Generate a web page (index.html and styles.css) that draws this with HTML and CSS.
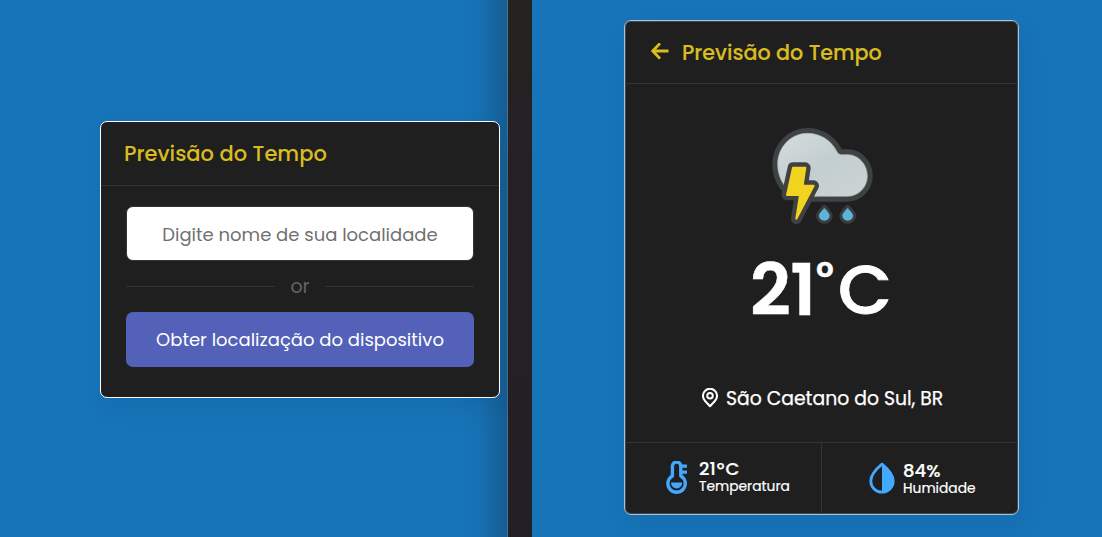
FILE: index.html
```html
<!DOCTYPE html>
<html lang="pt-BR">
<head>
<meta charset="utf-8">
<title>Previsão do Tempo</title>
<link rel="stylesheet" href="styles.css">
</head>
<body>
<main class="screens">
  <section class="pane pane-search">
    <div class="card search-card">
      <header class="card-header search-header"><span class="title">Previsão do Tempo</span></header>
      <div class="search-body">
        <input class="city" type="text" placeholder="Digite nome de sua localidade">
        <div class="separator"><span class="or">or</span></div>
        <button class="locate"><span>Obter localização do dispositivo</span></button>
      </div>
    </div>
  </section>
  <div class="gutter"></div>
  <section class="pane pane-result">
    <div class="card result-card">
      <header class="card-header result-header">
        <svg class="back" width="18" height="18" viewBox="0 0 18 18"><path d="M17.5 8H2.5M9 .4L1.8 8L9 15.6" fill="none" stroke="#d9bd20" stroke-width="2.8"/></svg>
        <span class="title title-result">Previsão do Tempo</span>
      </header>
      <div class="weather">
        <svg class="storm" width="125" height="120" viewBox="0 0 375 360">
          <defs>
            <linearGradient id="cloud" x1="0" y1="0" x2="1" y2="1"><stop offset="0" stop-color="#d5dddd"/><stop offset="0.5" stop-color="#c3ced0"/><stop offset="1" stop-color="#cdd5d5"/></linearGradient>
            <linearGradient id="bolt" x1="0" y1="0" x2="0" y2="1"><stop offset="0" stop-color="#f0d420"/><stop offset="1" stop-color="#f3d51c"/></linearGradient>
          </defs>
          <g stroke-linejoin="round">
            <path d="M142 55C180 55 211 75 228 105C234 117 240 120 250 119H264C296 119 322 149 322 183C322 218 294 244 262 244H120C82 236 53 194 53 148C53 96 93 55 142 55Z" fill="#404142" stroke="#404142" stroke-width="32"/>
            <path d="M142 55C180 55 211 75 228 105C234 117 240 120 250 119H264C296 119 322 149 322 183C322 218 294 244 262 244H120C82 236 53 194 53 148C53 96 93 55 142 55Z" fill="url(#cloud)" stroke="#aab5b7" stroke-width="2"/>
            <path d="M99 158H136L128 212H161L109 311L120 240H81Z" fill="#404142" stroke="#404142" stroke-width="32"/>
            <path d="M99 158H136L128 212H161L109 311L120 240H81Z" fill="url(#bolt)" stroke="#f0d420" stroke-width="6"/>
            <path d="M193 279C200 287 209 296 209 302A16 15 0 0 1 177 302C177 296 186 287 193 279Z" fill="#5eb3d8" stroke="#3b3c3d" stroke-width="18" paint-order="stroke"/>
            <path d="M263 279C270 287 279 296 279 302A16 15 0 0 1 247 302C247 296 256 287 263 279Z" fill="#5eb3d8" stroke="#3b3c3d" stroke-width="18" paint-order="stroke"/>
          </g>
        </svg>
        <div class="temp"><span class="number">21</span><span class="deg">°</span><span class="unit">C</span></div>
        <div class="place">
          <svg width="16" height="20" viewBox="0 0 16 20"><path d="M8 18.2L3.1 13C-.2 9.5.7 4.8 3.2 2.8C6-.1 10-.1 12.8 2.8C15.3 4.8 16.2 9.5 12.9 13Z" fill="none" stroke="#fff" stroke-width="2" stroke-linejoin="round"/><circle cx="8" cy="7.8" r="2.8" fill="none" stroke="#fff" stroke-width="2"/></svg>
          <span class="place-name">São Caetano do Sul, BR</span>
        </div>
      </div>
      <footer class="details">
        <div class="detail detail-temp">
          <svg width="22" height="34" viewBox="0 0 22 34"><path d="M6.4 15V5.2A4.2 4.2 0 0 1 14.8 5.2V15A8.7 8.7 0 1 1 6.4 15Z" fill="none" stroke="#42a9ff" stroke-width="3.4" stroke-linejoin="round"/><path d="M15 5.2H21M15 11.2H21" stroke="#42a9ff" stroke-width="3.2"/><path d="M5 21.4H16.2A5.5 5.9 0 0 1 5 21.4Z" fill="#42a9ff"/></svg>
          <div class="reading"><span class="value">21<span class="small-deg">°</span>C</span><span class="label">Temperatura</span></div>
        </div>
        <div class="detail detail-hum">
          <svg width="26" height="32" viewBox="0 0 26 32"><path d="M13 2.2C6 8 1.8 13 1.8 19A11.2 11.2 0 0 0 24.2 19C24.2 13 20 8 13 2.2Z" fill="none" stroke="#42a9ff" stroke-width="2.8" stroke-linejoin="round"/><path d="M13 2C20 8 24 13 24 19A11 11 0 0 1 13 30Z" fill="#42a9ff"/></svg>
          <div class="reading reading-hum"><span class="value">84%</span><span class="label">Humidade</span></div>
        </div>
      </footer>
    </div>
  </section>
</main>
</body>
</html>
```
FILE: styles.css
```css
* { box-sizing: border-box; }
body { margin: 0; background: #1774b9; font-family: Poppins, Inter, sans-serif; color: #fff; }
span { white-space: nowrap; }
svg { display: block; flex: none; }
.screens { display: grid; grid-template-columns: 508px 24px 570px; height: 537px; overflow: hidden; }
.pane-search { padding: 121px 8px 0 100px; background: linear-gradient(90deg, transparent 460px, rgba(20, 86, 135, .15) 480px, rgba(20, 86, 135, .75) 507px, #47718c 507px); }
.gutter { background: linear-gradient(#24231f 0, #24231f 72px, #252125 105px, #231f26 100%); }
.pane-result { padding: 20px 0 0 92px; }
.card { background: #1f1f1f; border-radius: 7px; box-shadow: 5px 10px 25px rgba(0, 0, 0, .07); }
.search-card { width: 400px; height: 277px; border: 1px solid #fff; }
.card-header { display: flex; align-items: center; border-bottom: 1px solid #343434; color: #d9bd20; }
.search-header { height: 64px; padding-left: 23px; }
.title { font-size: 21px; font-weight: 500; }
.search-body { padding: 20px 25px 0; }
.city { display: block; width: 348px; height: 55px; padding: 1px 0 0; border: 1px solid #343434; border-radius: 7px; background: #fff; text-align: center; font: 400 18px Poppins, Inter, sans-serif; }
.city::placeholder { color: #707070; opacity: 1; }
.separator { display: flex; align-items: center; gap: 15px; height: 51px; color: #636363; }
.separator::before, .separator::after { content: ""; flex: 1; height: 1px; background: #343434; }
.or { width: 20px; text-align: center; font-size: 19px; }
.locate { display: block; width: 348px; height: 55px; padding: 0; border: 0; border-radius: 7px; background: #5461b8; color: #fff; font: 400 18px Poppins, Inter, sans-serif; }
.result-card { width: 395px; height: 495px; border: 1px solid #a9c3d4; box-shadow: inset 0 0 0 1px rgba(169, 195, 212, .25), 5px 10px 25px rgba(0, 0, 0, .07); }
.result-header { height: 63px; padding-left: 26px; gap: 13px; }
.title-result { font-size: 20.7px; -webkit-text-stroke: .15px #d9bd20; }
.weather { height: 358px; padding-top: 31px; }
.storm { margin-left: 135px; }
.temp { display: flex; height: 90px; margin-left: 125px; line-height: 90px; padding-top: 10px; }
.number { width: 66px; font-size: 71px; font-weight: 600; letter-spacing: -.5px; -webkit-text-stroke: .5px #fff; }
.deg { width: 22px; margin-top: -13px; font-size: 40px; font-weight: 600; -webkit-text-stroke: .4px #fff; }
.unit { font-size: 70px; font-weight: 500; -webkit-text-stroke: .8px #fff; }
.place { display: flex; align-items: center; gap: 8px; height: 30px; margin: 58px 0 0 77px; }
.place-name { font-size: 18.8px; font-weight: 400; -webkit-text-stroke: .25px #fff; }
.details { display: grid; grid-template-columns: 197px 1fr; height: 72px; border-top: 1px solid #343434; }
.detail { display: flex; align-items: center; }
.detail-temp { padding: 0 0 2px 41px; gap: 11px; border-right: 1px solid #343434; }
.detail-hum { padding: 0 0 1px 47px; gap: 8px; }
.reading { display: flex; flex-direction: column; }
.reading-hum { padding-top: 3px; }
.value { height: 18px; font-size: 18px; font-weight: 500; line-height: 18px; -webkit-text-stroke: .2px #fff; }
.small-deg { margin: 0 1px; }
.label { height: 17px; font-size: 13.8px; line-height: 17px; font-weight: 400; -webkit-text-stroke: .2px #fff; }
```
